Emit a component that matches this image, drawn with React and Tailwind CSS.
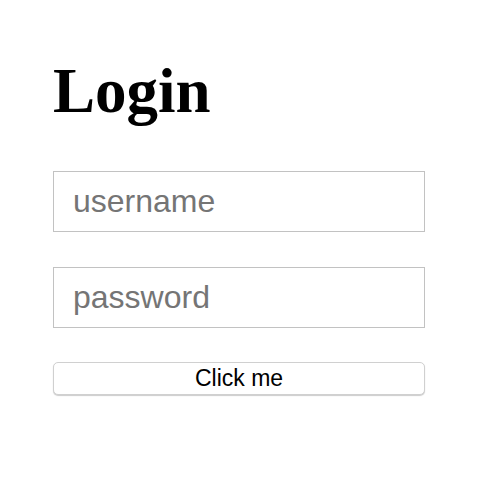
export default function App() {
  return (
    <div className="min-h-[490px] w-[490px] bg-white pl-[53px] pt-[60px]">
      <h1 className="font-['Liberation_Serif',serif] text-[63px] font-bold leading-none text-black">
        Login
      </h1>
      <div className="mt-[48px] flex w-[372px] flex-col">
        <input
          className="h-[61px] border border-[#c2c2c2] px-[19px] font-['Liberation_Sans',Arial,sans-serif] text-[32px] text-black outline-none placeholder:text-[#757575]"
          type="text"
          placeholder="username"
        />
        <input
          className="mt-[35px] h-[61px] border border-[#c2c2c2] px-[19px] font-['Liberation_Sans',Arial,sans-serif] text-[32px] text-black outline-none placeholder:text-[#757575]"
          type="password"
          placeholder="password"
        />
        <button className="mt-[34px] h-[33px] rounded-[5px] border border-[#d0d0d0] bg-white font-['Liberation_Sans',Arial,sans-serif] text-[23px] leading-none text-black shadow-[0_1px_1px_rgba(0,0,0,0.2)]">
          Click me
        </button>
      </div>
    </div>
  );
}
